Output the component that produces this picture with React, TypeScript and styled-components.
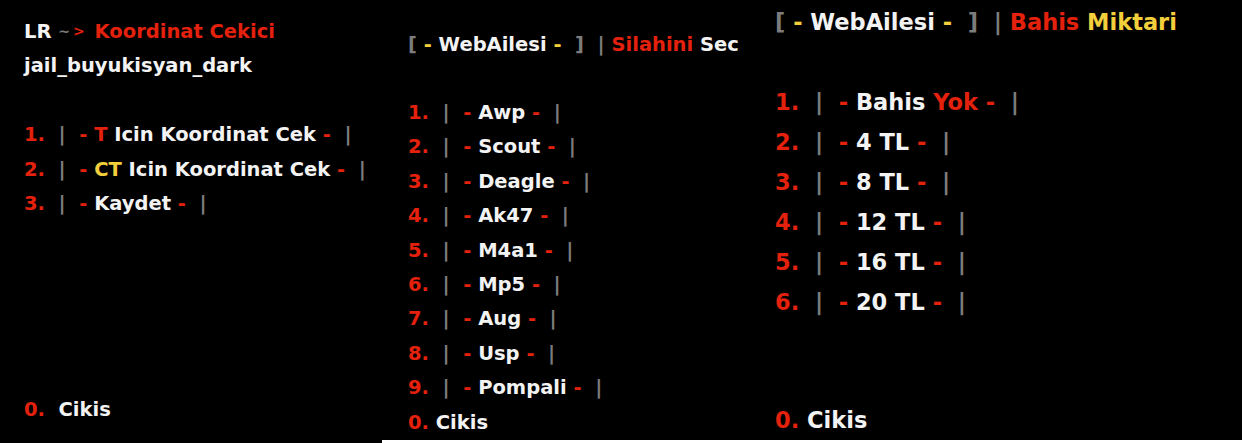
import React from 'react';
import styled, { createGlobalStyle } from 'styled-components';

const GlobalStyle = createGlobalStyle`
    html, body {
        margin: 0;
        padding: 0;
        background: #ffffff;
    }
`;

const Screen = styled.div`
    display: flex;
    align-items: flex-start;
    width: 1242px;
    height: 443px;
    background: #ffffff;
`;

type PanelProps = {
    $width: number;
    $height: number;
    $size: number;
    $lh: number;
    $pad: string;
};

const Panel = styled.section<PanelProps>`
    --lh: ${p => p.$lh}px;
    display: flex;
    flex-direction: column;
    box-sizing: border-box;
    width: ${p => p.$width}px;
    height: ${p => p.$height}px;
    padding: ${p => p.$pad};
    background: #000000;
    color: #f3f3f3;
    font-family: "DejaVu Sans", Verdana, sans-serif;
    font-weight: bold;
    font-size: ${p => p.$size}px;
    line-height: var(--lh);
    white-space: pre;
    overflow: hidden;
`;

const Line = styled.div``;

const Spacer = styled.div`
    height: var(--lh);
`;

const Footer = styled.div<{ $bottom: number }>`
    margin-top: auto;
    padding-bottom: ${p => p.$bottom}px;
`;

const tones = {
    red: '#e4210d',
    gold: '#f3cf3c',
    gray: '#7c7c7c',
    white: '#f3f3f3',
};

const Tone = styled.span<{ $tone: keyof typeof tones }>`
    color: ${p => tones[p.$tone]};
`;

// the small "~>" arrow in the title line
const Arrow = styled.span`
    font-size: 0.72em;
    letter-spacing: 3px;
    vertical-align: 0.12em;
`;

// "N.  |  - label -  |"
const Item = ({ n, children }: { n: number; children: React.ReactNode }) => (
    <Line>
        <Tone $tone="red">{n}.</Tone>
        {'  '}
        <Tone $tone="gray">|</Tone>
        {'  '}
        <Tone $tone="red">-</Tone>
        {' '}
        {children}
        {' '}
        <Tone $tone="red">-</Tone>
        {'  '}
        <Tone $tone="gray">|</Tone>
    </Line>
);

const Exit = ({ gap, bottom }: { gap: string; bottom: number }) => (
    <Footer $bottom={bottom}>
        <Tone $tone="red">0.</Tone>
        {gap}
        Cikis
    </Footer>
);

const Brand = () => (
    <>
        <Tone $tone="gray">[</Tone>
        {' '}
        <Tone $tone="gold">-</Tone>
        {' WebAilesi '}
        <Tone $tone="gold">-</Tone>
        {'  '}
        <Tone $tone="gray">]</Tone>
        {'  '}
        <Tone $tone="gray">|</Tone>
        {' '}
    </>
);

const weapons = ['Awp', 'Scout', 'Deagle', 'Ak47', 'M4a1', 'Mp5', 'Aug', 'Usp', 'Pompali'];
const bets = ['4 TL', '8 TL', '12 TL', '16 TL', '20 TL'];

const App = () => {
    return (
        <>
            <GlobalStyle />
            <Screen>
                <Panel $width={382} $height={443} $size={19.5} $lh={34.5} $pad="14px 0 0 24px">
                    <Line>
                        LR{' '}
                        <Arrow>
                            <Tone $tone="gray">~</Tone>
                            <Tone $tone="red">{'>'}</Tone>
                        </Arrow>
                        <Tone $tone="red">{' Koordinat Cekici'}</Tone>
                    </Line>
                    <Line>jail_buyukisyan_dark</Line>
                    <Spacer />
                    <Item n={1}>
                        <Tone $tone="red">T</Tone> Icin Koordinat Cek
                    </Item>
                    <Item n={2}>
                        <Tone $tone="gold">CT</Tone> Icin Koordinat Cek
                    </Item>
                    <Item n={3}>Kaydet</Item>
                    <Exit gap="  " bottom={16} />
                </Panel>

                <Panel $width={375} $height={440} $size={19.5} $lh={34.4} $pad="28px 0 0 26px">
                    <Line>
                        <Brand />
                        <Tone $tone="red">Silahini</Tone> Sec
                    </Line>
                    <Spacer />
                    {weapons.map((w, i) => (
                        <Item key={w} n={i + 1}>{w}</Item>
                    ))}
                    <Exit gap=" " bottom={0} />
                </Panel>

                <Panel $width={485} $height={440} $size={22.5} $lh={40} $pad="2px 0 0 18px">
                    <Line>
                        <Brand />
                        <Tone $tone="red">Bahis</Tone> <Tone $tone="gold">Miktari</Tone>
                    </Line>
                    <Spacer />
                    <Item n={1}>
                        Bahis <Tone $tone="red">Yok</Tone>
                    </Item>
                    {bets.map((b, i) => (
                        <Item key={b} n={i + 2}>{b}</Item>
                    ))}
                    <Exit gap=" " bottom={0} />
                </Panel>
            </Screen>
        </>
    );
};

export default App;
